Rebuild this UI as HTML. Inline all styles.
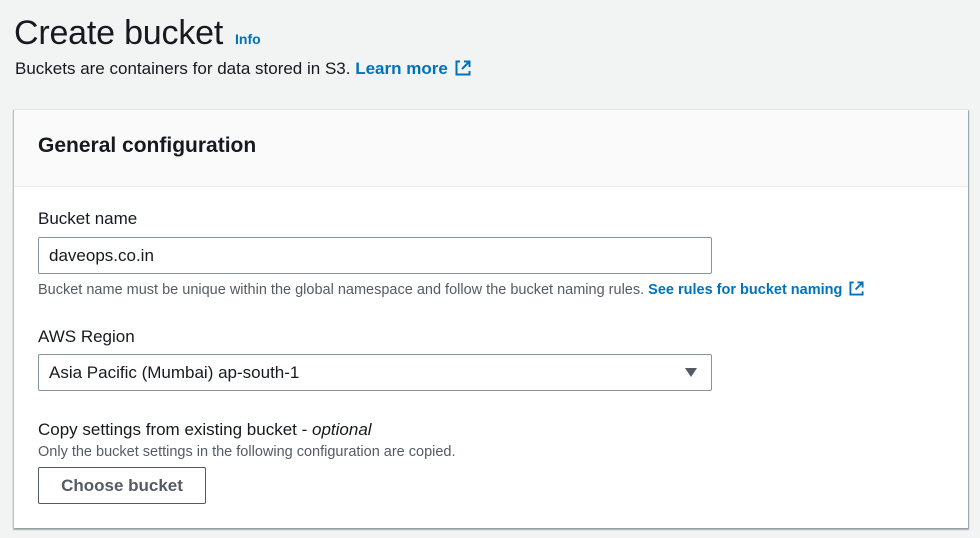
<!DOCTYPE html>
<html><head><style>
body{margin:0;width:980px;height:538px;background:#f2f3f3;font-family:"Liberation Sans",sans-serif;color:#16191f;position:relative;overflow:hidden}
.a{position:absolute;white-space:nowrap}
.link{color:#0073bb;font-weight:bold}
.card{position:absolute;left:14px;top:110px;width:954px;height:418px;background:#fff;box-shadow:0 1px 1px 1px rgba(0,28,36,.3),1px 1px 1px 0 rgba(0,28,36,.15)}
.hdr{position:absolute;left:0;top:0;width:954px;height:76px;background:#fafafa;border-bottom:1px solid #eaeded}
.inp{position:absolute;left:24px;width:672px;height:35px;border:1px solid #879596;border-radius:2px;background:#fff}
.ext{display:inline-block;vertical-align:-2px;margin-left:7px}
</style></head><body>
<div class="a" style="left:14px;top:14px;font-size:34px;letter-spacing:-0.2px">Create bucket</div>
<div class="a link" style="left:235px;top:31px;font-size:14px">Info</div>
<div class="a" style="left:15px;top:59px;font-size:17px">Buckets are containers for data stored in S3. <span class="link">Learn more</span><svg class="ext" width="16" height="16" viewBox="0 0 16 16" fill="none" stroke="#0073bb" stroke-width="2"><path d="M5 1.5H1.5v13h13V11M9 1.5h5.5V7M14.5 1.5L7 9"/></svg></div>
<div class="card">
<div class="hdr"><div class="a" style="left:24px;top:24px;font-size:21px;font-weight:bold">General configuration</div></div>
<div class="a" style="left:24px;top:99px;font-size:17px">Bucket name</div>
<div class="inp" style="top:127px"><div class="a" style="left:10px;top:8px;font-size:17px">daveops.co.in</div></div>
<div class="a" style="left:24px;top:171px;font-size:14.5px;color:#545b64">Bucket name must be unique within the global namespace and follow the bucket naming rules. <span class="link">See rules for bucket naming</span><svg class="ext" width="15" height="15" viewBox="0 0 16 16" fill="none" stroke="#0073bb" stroke-width="2"><path d="M5 1.5H1.5v13h13V11M9 1.5h5.5V7M14.5 1.5L7 9"/></svg></div>
<div class="a" style="left:24px;top:217px;font-size:17px">AWS Region</div>
<div class="inp" style="top:244px"><div class="a" style="left:10px;top:8px;font-size:17px">Asia Pacific (Mumbai) ap-south-1</div>
<svg class="a" style="left:646px;top:13px" width="12" height="10" viewBox="0 0 12 10"><path d="M0 0h12L6 9z" fill="#545b64"/></svg></div>
<div class="a" style="left:24px;top:310px;font-size:17px">Copy settings from existing bucket - <i>optional</i></div>
<div class="a" style="left:24px;top:334px;font-size:14.5px;color:#545b64">Only the bucket settings in the following configuration are copied.</div>
<div class="a" style="left:24px;top:357px;width:166px;height:35px;border:1px solid #545b64;border-radius:2px;font-size:17px;font-weight:bold;color:#545b64;text-align:center;line-height:35px">Choose bucket</div>
</div>
</body></html>
